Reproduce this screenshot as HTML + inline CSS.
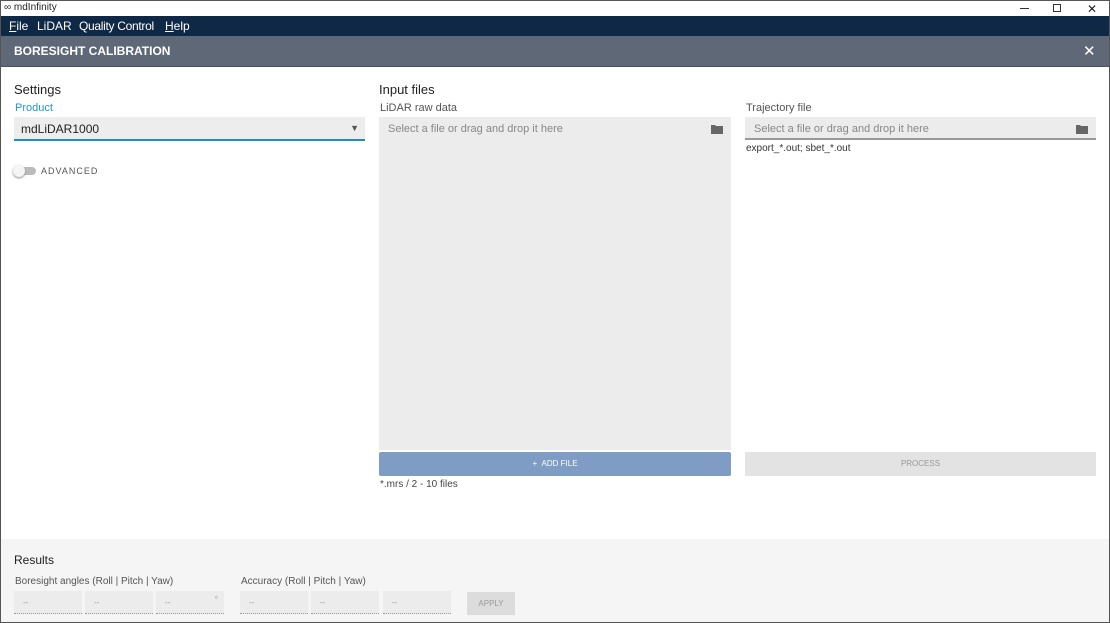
<!DOCTYPE html>
<html><head><style>
*{margin:0;padding:0;box-sizing:border-box}
body{width:1110px;height:623px;overflow:hidden;font-family:"Liberation Sans",sans-serif;background:#fff;position:relative}
.a{position:absolute}
.frame{left:0;top:0;width:1110px;height:623px;border:1px solid #555;pointer-events:none}
</style></head><body>
<div class="a" style="left:0;top:0;width:1110px;height:16px;background:#fff;font-size:10px;color:#222">
 <span class="a" style="left:4px;top:2px">&#8734; mdInfinity</span>
 <span class="a" style="left:1020px;top:8px;width:9px;height:1px;background:#333"></span>
 <span class="a" style="left:1053px;top:4px;width:8px;height:8px;border:1px solid #333"></span>
 <span class="a" style="left:1087px;top:2px;font-size:12px">&#10005;</span>
</div>
<div class="a" style="left:0;top:16px;width:1110px;height:20px;background:#0f2845;color:#fff;font-size:12px">
 <span class="a" style="left:9px;top:3px"><u>F</u>ile</span>
 <span class="a" style="left:37px;top:3px">LiDAR</span>
 <span class="a" style="left:79px;top:3px;letter-spacing:-0.3px">Quality Control</span>
 <span class="a" style="left:165px;top:3px"><u>H</u>elp</span>
</div>
<div class="a" style="left:0;top:36px;width:1110px;height:31px;background:#5e6877;border-bottom:1px solid #4a5260;color:#fff">
 <span class="a" style="left:14px;top:8px;font-size:12px;font-weight:bold">BORESIGHT CALIBRATION</span>
 <span class="a" style="left:1083px;top:6px;font-size:15px">&#10005;</span>
</div>
<div class="a" style="left:14px;top:82px;font-size:13px;color:#222">Settings</div>
<div class="a" style="left:15px;top:102px;font-size:11px;color:#1a9bc7">Product</div>
<div class="a" style="left:14px;top:117px;width:351px;height:24px;background:#ededed;border-bottom:2px solid #1a8fc0;font-size:12px;color:#222;padding:5px 7px">mdLiDAR1000<span class="a" style="right:6px;top:6px;font-size:9px;color:#555">&#9660;</span></div>
<div class="a" style="left:14px;top:167px;width:22px;height:8px;border-radius:4px;background:#bbb"></div>
<div class="a" style="left:13px;top:165px;width:12px;height:12px;border-radius:6px;background:#f5f5f5;box-shadow:0 1px 2px #888"></div>
<div class="a" style="left:41px;top:166px;font-size:9px;letter-spacing:1px;color:#555">ADVANCED</div>

<div class="a" style="left:379px;top:82px;font-size:13px;color:#222">Input files</div>
<div class="a" style="left:380px;top:102px;font-size:11px;color:#555">LiDAR raw data</div>
<div class="a" style="left:379px;top:117px;width:352px;height:333px;background:#ececec;font-size:11px;color:#888;padding:6px 9px">Select a file or drag and drop it here
 <svg class="a" style="left:332px;top:7px" width="12" height="10" viewBox="0 0 12 10"><path d="M0 1h4l1 1h7v8H0z" fill="#666"/></svg></div>
<div class="a" style="left:379px;top:452px;width:352px;height:24px;background:#7e9cc4;border-radius:2px;color:#fff;font-size:8px;text-align:center;line-height:24px">+ &nbsp;ADD FILE</div>
<div class="a" style="left:380px;top:479px;font-size:10px;color:#444">*.mrs / 2 - 10 files</div>

<div class="a" style="left:746px;top:102px;font-size:11px;color:#555">Trajectory file</div>
<div class="a" style="left:745px;top:117px;width:351px;height:23px;background:#ececec;border-bottom:2px solid #999;font-size:11px;color:#888;padding:6px 9px">Select a file or drag and drop it here
 <svg class="a" style="left:331px;top:7px" width="12" height="10" viewBox="0 0 12 10"><path d="M0 1h4l1 1h7v8H0z" fill="#666"/></svg></div>
<div class="a" style="left:746px;top:143px;font-size:10px;color:#333">export_*.out; sbet_*.out</div>
<div class="a" style="left:745px;top:452px;width:351px;height:24px;background:#e3e3e3;color:#999;font-size:8px;text-align:center;line-height:24px">PROCESS</div>

<div class="a" style="left:1px;top:539px;width:1108px;height:83px;background:#f5f5f5"></div>
<div class="a" style="left:14px;top:553px;font-size:12px;color:#222">Results</div>
<div class="a" style="left:15px;top:576px;font-size:10px;color:#555">Boresight angles (Roll | Pitch | Yaw)</div>
<div class="a" style="left:241px;top:576px;font-size:10px;color:#555">Accuracy (Roll | Pitch | Yaw)</div>
<div class="a" style="left:14px;top:591px;width:68px;height:23px;background:#ececec;border-bottom:1px dotted #999;font-size:8px;color:#999;padding:7px 9px">--</div>
<div class="a" style="left:85px;top:591px;width:68px;height:23px;background:#ececec;border-bottom:1px dotted #999;font-size:8px;color:#999;padding:7px 9px">--</div>
<div class="a" style="left:156px;top:591px;width:68px;height:23px;background:#ececec;border-bottom:1px dotted #999;font-size:8px;color:#999;padding:7px 9px">--<span class="a" style="right:6px;top:4px">°</span></div>
<div class="a" style="left:240px;top:591px;width:68px;height:23px;background:#ececec;border-bottom:1px dotted #999;font-size:8px;color:#999;padding:7px 9px">--</div>
<div class="a" style="left:311px;top:591px;width:68px;height:23px;background:#ececec;border-bottom:1px dotted #999;font-size:8px;color:#999;padding:7px 9px">--</div>
<div class="a" style="left:383px;top:591px;width:68px;height:23px;background:#ececec;border-bottom:1px dotted #999;font-size:8px;color:#999;padding:7px 9px">--</div>
<div class="a" style="left:467px;top:592px;width:48px;height:23px;background:#dcdcdc;font-size:8px;color:#999;text-align:center;line-height:23px">APPLY</div>
<div class="a frame"></div>
</body></html>
